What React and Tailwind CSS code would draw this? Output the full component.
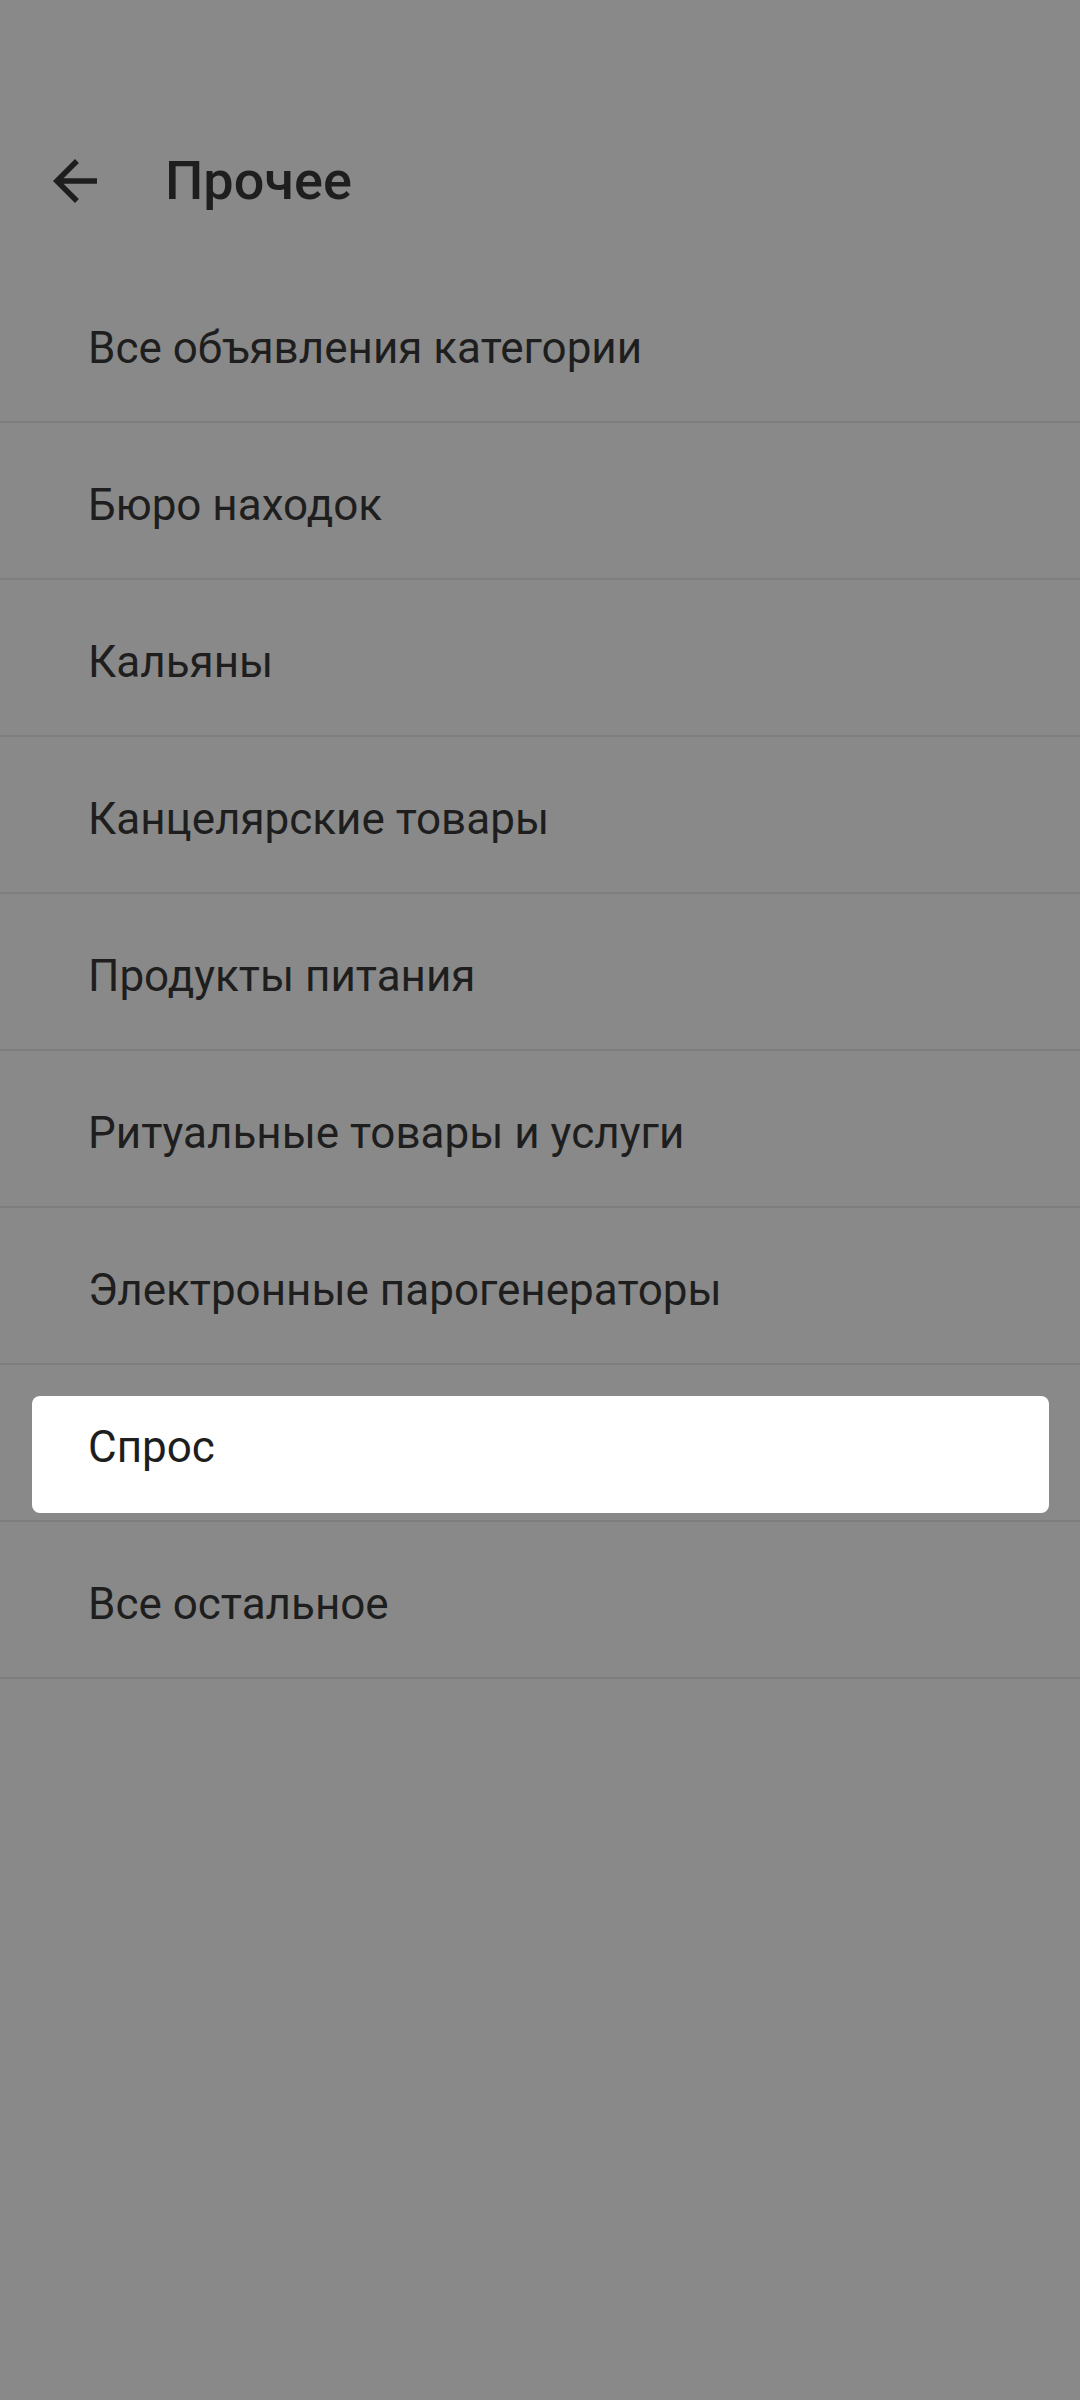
import { useState } from 'react'

const categories = [
  'Все объявления категории',
  'Бюро находок',
  'Кальяны',
  'Канцелярские товары',
  'Продукты питания',
  'Ритуальные товары и услуги',
  'Электронные парогенераторы',
  'Спрос',
  'Все остальное',
]

function BackArrow() {
  return (
    <svg width="66" height="66" viewBox="0 0 24 24" fill="currentColor" xmlns="http://www.w3.org/2000/svg">
      <path d="M20 11H7.83l5.59-5.59L12 4l-8 8 8 8 1.41-1.41L7.83 13H20v-2z" />
    </svg>
  )
}

function App() {
  const [selected, setSelected] = useState('Спрос')

  return (
    <div
      className="min-h-[2400px] w-[1080px] bg-[#898989] pt-[126px] text-[#1e1e1e]"
      style={{ fontFamily: 'Roboto, "Noto Sans", sans-serif' }}
    >
      <header className="flex h-[110px] items-center">
        <button className="ml-[42px] flex h-[66px] w-[66px] items-center justify-center text-[#1e1e1e]" aria-label="Назад">
          <BackArrow />
        </button>
        <h1 className="ml-[57px] text-[54px] font-medium leading-none">Прочее</h1>
      </header>

      <ul className="mt-[30px]">
        {categories.map((item) => (
          <li
            key={item}
            onClick={() => setSelected(item)}
            className="relative flex h-[157px] items-center border-b-2 border-[#7e7e7e] pt-[9px]"
          >
            {selected === item ? (
              <div className="absolute left-[32px] right-[31px] top-[31px] bottom-[7px] rounded-[8px] bg-white" />
            ) : null}
            <span className="relative pl-[88px] text-[44px] leading-none">{item}</span>
          </li>
        ))}
      </ul>
    </div>
  )
}

export default App
